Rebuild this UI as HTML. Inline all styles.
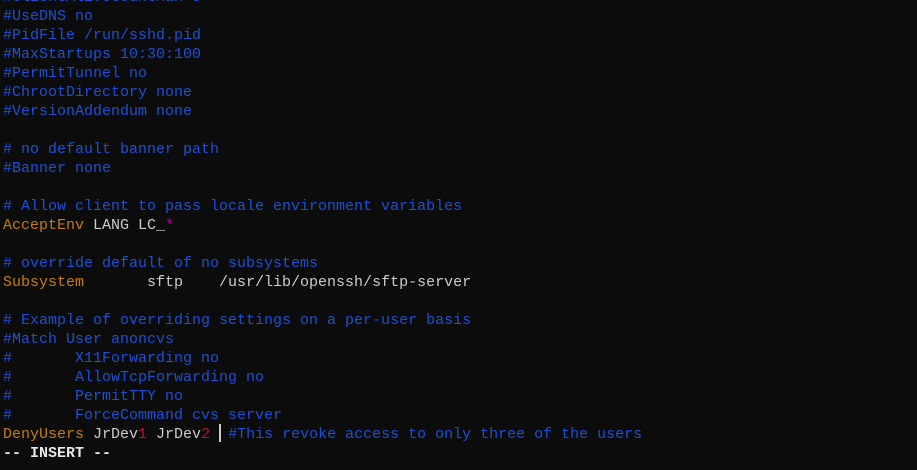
<!DOCTYPE html>
<html><head><style>
html,body{margin:0;padding:0;background:#0c0c0c;width:917px;height:470px;overflow:hidden}
pre{margin:0;position:absolute;left:3px;top:-12px;font-family:"Liberation Mono",monospace;font-size:15px;line-height:19px;color:#cccccc;white-space:pre}
.c{color:#1f4fd6}.o{color:#c77c0e}.r{color:#c50f1f}.m{color:#b4009e}
#cur{position:absolute;left:219px;top:424px;width:2px;height:18px;background:#cccccc}
b{font-weight:bold;color:#e8e8e8}
</style></head><body>
<pre><span class="c">#ClientAliveCountMax 3</span>
<span class="c">#UseDNS no</span>
<span class="c">#PidFile /run/sshd.pid</span>
<span class="c">#MaxStartups 10:30:100</span>
<span class="c">#PermitTunnel no</span>
<span class="c">#ChrootDirectory none</span>
<span class="c">#VersionAddendum none</span>

<span class="c"># no default banner path</span>
<span class="c">#Banner none</span>

<span class="c"># Allow client to pass locale environment variables</span>
<span class="o">AcceptEnv</span> LANG LC_<span class="m">*</span>

<span class="c"># override default of no subsystems</span>
<span class="o">Subsystem</span>       sftp    /usr/lib/openssh/sftp-server

<span class="c"># Example of overriding settings on a per-user basis</span>
<span class="c">#Match User anoncvs</span>
<span class="c">#       X11Forwarding no</span>
<span class="c">#       AllowTcpForwarding no</span>
<span class="c">#       PermitTTY no</span>
<span class="c">#       ForceCommand cvs server</span>
<span class="o">DenyUsers</span> JrDev<span class="r">1</span> JrDev<span class="r">2</span>  <span class="c">#This revoke access to only three of the users</span>
<b>-- INSERT --</b></pre>
<div id="cur"></div>
</body></html>
